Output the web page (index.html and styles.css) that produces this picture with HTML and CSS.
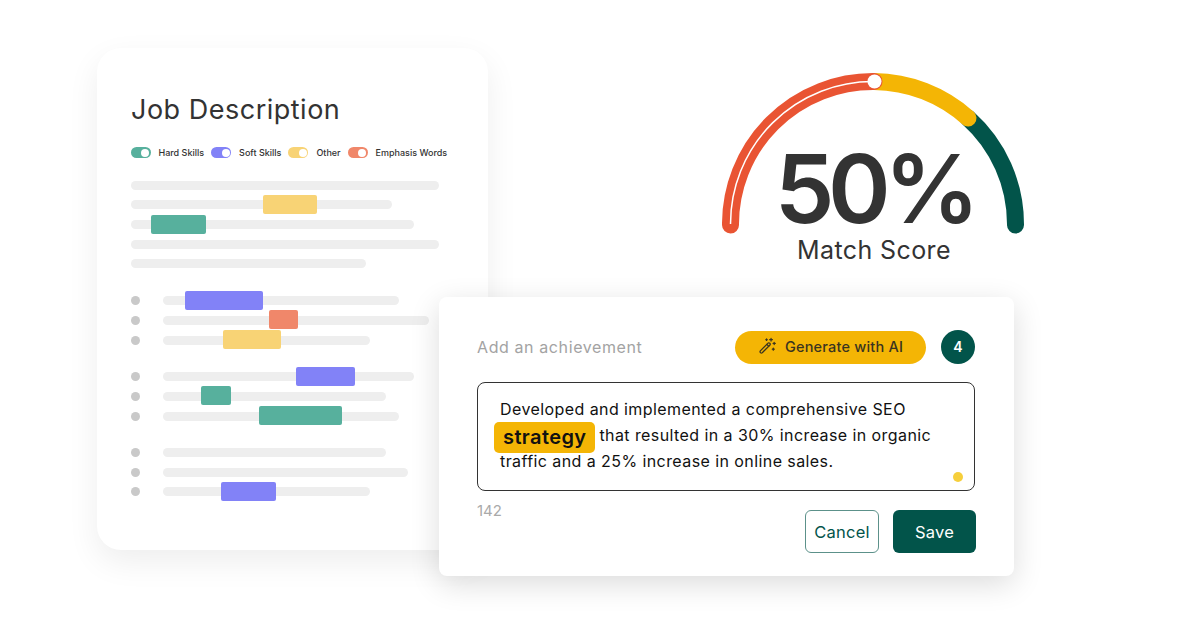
FILE: index.html
```html
<!DOCTYPE html>
<html lang="en">
<head>
    <meta charset="UTF-8">
    <meta name="viewport" content="width=device-width, initial-scale=1.0">
    <title>Match Score</title>
    <link rel="stylesheet" href="styles.css">
</head>
<body>
    <div class="stage">
        <!-- Job description card -->
        <section class="job-card">
            <h1 class="job-title">Job Description</h1>
            <div class="legend">
                <span class="toggle teal"></span><span class="legend-label">Hard Skills</span>
                <span class="toggle purple"></span><span class="legend-label">Soft Skills</span>
                <span class="toggle yellow"></span><span class="legend-label">Other</span>
                <span class="toggle orange"></span><span class="legend-label">Emphasis Words</span>
            </div>
            <div class="lines">
                <div class="bar" style="width:308px"></div>
                <div class="bar" style="width:261px"><span class="chip yellow" style="margin-left:131.5px;width:54.5px"></span></div>
                <div class="bar" style="width:283px"><span class="chip teal" style="margin-left:20px;width:54.5px"></span></div>
                <div class="bar" style="width:308px"></div>
                <div class="bar" style="width:235px"></div>
            </div>
            <div class="group first">
                <div class="row"><i class="dot"></i><div class="bar" style="width:236px"><span class="chip purple" style="margin-left:21.5px;width:78.5px"></span></div></div>
                <div class="row"><i class="dot"></i><div class="bar" style="width:266px"><span class="chip orange" style="margin-left:106px;width:29px"></span></div></div>
                <div class="row"><i class="dot"></i><div class="bar" style="width:207px"><span class="chip yellow" style="margin-left:59.5px;width:58.5px"></span></div></div>
            </div>
            <div class="group">
                <div class="row"><i class="dot"></i><div class="bar" style="width:251px"><span class="chip purple" style="margin-left:133px;width:59px"></span></div></div>
                <div class="row"><i class="dot"></i><div class="bar" style="width:223px"><span class="chip teal" style="margin-left:38px;width:29.5px"></span></div></div>
                <div class="row"><i class="dot"></i><div class="bar" style="width:236px"><span class="chip teal" style="margin-left:95.5px;width:83px"></span></div></div>
            </div>
            <div class="group">
                <div class="row"><i class="dot"></i><div class="bar" style="width:223px"></div></div>
                <div class="row"><i class="dot"></i><div class="bar" style="width:245px"></div></div>
                <div class="row"><i class="dot"></i><div class="bar" style="width:207px"><span class="chip purple" style="margin-left:58px;width:54.5px"></span></div></div>
            </div>
        </section>

        <!-- Score gauge -->
        <section class="gauge">
            <svg class="gauge-arc" width="304" height="164" viewBox="0 0 304 164" fill="none">
                <path d="M293.5 153A142.5 142.5 0 0 0 246 46" stroke="#02544a" stroke-width="17" stroke-linecap="round"/>
                <path d="M152 9.5A142.5 142.5 0 0 1 246 46" stroke="#f4b505" stroke-width="17" stroke-linecap="round"/>
                <path d="M8.5 153A142.5 142.5 0 0 1 152 9.5" stroke="#e95433" stroke-width="17" stroke-linecap="round"/>
                <path d="M8.5 152A142.5 142.5 0 0 1 152 9.5" stroke="#fff" stroke-width="1.5"/>
                <circle cx="152.5" cy="9.5" r="7" fill="#fff"/>
            </svg>
            <div class="score">50%</div>
            <div class="score-label">Match Score</div>
        </section>

        <!-- Achievement editor -->
        <section class="editor">
            <div class="editor-head">
                <span class="editor-label">Add an achievement</span>
                <button class="ai-button">
                    <svg width="18" height="18" viewBox="0 0 20 20" fill="none" stroke="#3a3420" stroke-width="1.4" stroke-linecap="round" stroke-linejoin="round">
                        <path d="M2.6 15.4l8.6-8.6a1.5 1.5 0 0 1 2.1 2.1l-8.6 8.6a1.5 1.5 0 0 1-2.1-2.1z"/>
                        <path d="M9.8 8.2l2.1 2.1"/>
                        <path d="M14.5 1.5v3M13 3h3M18 6v2.4M16.8 7.2h2.4M17 12.4v2.2M15.9 13.5h2.2M9.5 2.2v1.6M8.7 3h1.6"/>
                    </svg>
                    Generate with AI
                </button>
                <span class="count">4</span>
            </div>
            <div class="text-box">
                <p>Developed and implemented a comprehensive SEO <mark class="keyword">strategy</mark> that resulted in a 30% increase in organic traffic and a 25% increase in online sales.</p>
                <i class="status-dot"></i>
            </div>
            <div class="editor-foot">
                <span class="char-count">142</span>
                <button class="btn btn-cancel">Cancel</button>
                <button class="btn btn-save">Save</button>
            </div>
        </section>
    </div>
</body>
</html>
```

FILE: styles.css
```css
/* Base */
body { margin: 0; background: #fff; font-family: Inter, "Open Sans", sans-serif; color: #333; }

.stage {
    position: relative;
    width: 1181px;
    height: 640px;
    overflow: hidden;
}

/* Job description card */
.job-card {
    position: absolute;
    left: 97px;
    top: 48px;
    width: 391px;
    height: 502px;
    box-sizing: border-box;
    padding: 44px 0 0 34px;
    background: #fff;
    border-radius: 24px;
    box-shadow: 0 12px 32px rgba(0, 0, 0, 0.07);
}

.job-title {
    margin: 0;
    height: 36px;
    line-height: 36px;
    font-size: 27px;
    font-weight: 400;
    letter-spacing: 0.5px;
    color: #333;
}

.legend {
    display: flex;
    align-items: center;
    height: 12px;
    margin: 18.5px 0 0.5px -0.5px;
}

.legend-label {
    margin: 0 7px 0 8px;
    font-size: 9px;
    font-weight: 500;
    color: #333;
}

.toggle {
    position: relative;
    width: 20px;
    height: 11px;
    border-radius: 6px;
}

.toggle::after {
    content: '';
    position: absolute;
    right: 1.5px;
    top: 1.5px;
    width: 8px;
    height: 8px;
    border-radius: 50%;
    background: #fff;
}

.teal { background: #57b09d; }
.purple { background: #8282f7; }
.yellow { background: #f8d375; }
.orange { background: #f0876a; }

.lines, .group {
    display: flex;
    flex-direction: column;
    gap: 10.7px;
}

.lines { margin-top: 22px; }
.group { margin-top: 27.5px; }
.group.first { margin-top: 28px; }

.bar {
    display: flex;
    align-items: center;
    height: 9px;
    border-radius: 5px;
    background: #eeeeee;
}

.chip {
    flex: none;
    height: 19px;
    border-radius: 2px;
}

.group .chip { margin-bottom: 1px; }

.row {
    display: flex;
    align-items: center;
    gap: 23px;
}

.dot {
    width: 9px;
    height: 9px;
    border-radius: 50%;
    background: #c9c9c9;
}

/* Gauge */
.gauge {
    position: absolute;
    left: 722px;
    top: 72px;
    width: 304px;
    height: 196px;
    text-align: center;
}

.gauge-arc {
    position: absolute;
    left: 0;
    top: 0;
}

.score {
    position: relative;
    padding-top: 77px;
    height: 80px;
    line-height: 80px;
    font-size: 95px;
    font-weight: 600;
    letter-spacing: -6.5px;
    color: #333;
}

.score-label {
    position: relative;
    margin-top: 6px;
    font-size: 25px;
    line-height: 30px;
    color: #333;
    letter-spacing: 0.4px;
}

/* Editor card */
.editor {
    position: absolute;
    left: 439px;
    top: 297px;
    width: 575px;
    height: 279px;
    box-sizing: border-box;
    padding: 33px 39px 0 38px;
    background: #fff;
    border-radius: 8px;
    box-shadow: 0 8px 30px rgba(0, 0, 0, 0.14);
}

.editor-head {
    display: flex;
    align-items: center;
    height: 34px;
}

.editor-label {
    flex: 1;
    font-size: 16px;
    letter-spacing: 0.6px;
    color: #a3a3a3;
}

.ai-button {
    display: flex;
    align-items: center;
    justify-content: center;
    gap: 9px;
    width: 191px;
    height: 33px;
    padding: 0 0 2px;
    border: none;
    border-radius: 17px;
    background: #f4b505;
    font-family: inherit;
    font-size: 14.5px;
    font-weight: 500;
    letter-spacing: 0.2px;
    color: #3a3420;
}

.count {
    width: 34px;
    height: 34px;
    margin-left: 15px;
    border-radius: 50%;
    background: #02544a;
    color: #fff;
    font-size: 14px;
    font-weight: 600;
    line-height: 34px;
    text-align: center;
}

.text-box {
    position: relative;
    box-sizing: border-box;
    width: 498px;
    height: 109px;
    margin-top: 18px;
    padding: 13px 22px 0;
    border: 1px solid #333;
    border-radius: 8px;
}

.text-box p {
    margin: 0;
    font-size: 16px;
    font-weight: 430;
    letter-spacing: 0.42px;
    line-height: 26px;
    color: #111;
}

.keyword {
    display: inline-block;
    height: 31px;
    margin: -4px -1px -6px -6px;
    padding: 0 9px;
    border-radius: 5px;
    background: #f4b505;
    font-size: 20px;
    font-weight: 600;
    letter-spacing: 0.4px;
    line-height: 31px;
    vertical-align: -3px;
    color: #111;
}

.status-dot {
    position: absolute;
    right: 11px;
    bottom: 8px;
    width: 10px;
    height: 10px;
    border-radius: 50%;
    background: #f6cf3c;
}

.editor-foot {
    display: flex;
    align-items: flex-start;
    margin-top: 19px;
}

.char-count {
    flex: 1;
    margin-top: -9px;
    font-size: 15px;
    line-height: 20px;
    color: #aaa;
}

.btn {
    height: 43px;
    border-radius: 6px;
    font-family: inherit;
    font-size: 16.5px;
    letter-spacing: 0.2px;
    padding: 0;
    cursor: pointer;
}

.btn-cancel {
    width: 74px;
    background: #fff;
    border: 1px solid #5c918a;
    color: #02544a;
}

.btn-save {
    width: 83px;
    margin: 0 -1px 0 14px;
    background: #02544a;
    border: none;
    color: #fff;
}
```
